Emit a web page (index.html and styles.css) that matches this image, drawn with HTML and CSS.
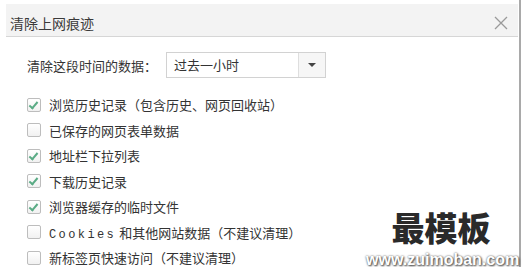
FILE: index.html
```html
<!DOCTYPE html>
<html lang="zh-CN">
<head>
    <meta charset="UTF-8">
    <title>清除上网痕迹</title>
    <link rel="stylesheet" href="styles.css">
</head>
<body>
    <div class="frame">
        <!-- 标题栏 -->
        <div class="header">
            <span class="title">清除上网痕迹</span>
            <svg class="close" width="14" height="14" viewBox="0 0 14 14">
                <path d="M1 1 L13 13 M13 1 L1 13" stroke="#9a9a9a" stroke-width="1.3" fill="none"/>
            </svg>
        </div>

        <!-- 时间范围 -->
        <div class="range-row">
            <span>清除这段时间的数据：</span>
            <div class="select">
                <span class="select-text">过去一小时</span>
                <span class="select-btn"><i class="arrow"></i></span>
            </div>
        </div>

        <!-- 选项列表 -->
        <div class="options">
            <div class="option"><span class="box checked"></span><span>浏览历史记录（包含历史、网页回收站）</span></div>
            <div class="option"><span class="box"></span><span>已保存的网页表单数据</span></div>
            <div class="option"><span class="box checked"></span><span>地址栏下拉列表</span></div>
            <div class="option"><span class="box checked"></span><span>下载历史记录</span></div>
            <div class="option"><span class="box checked"></span><span>浏览器缓存的临时文件</span></div>
            <div class="option"><span class="box"></span><span><span class="mono">Cookies</span> 和其他网站数据（不建议清理）</span></div>
            <div class="option"><span class="box"></span><span>新标签页快速访问（不建议清理）</span></div>
        </div>

        <div class="watermark">
            <div class="wm-big">最模板</div>
            <div class="wm-url">www.zuimoban.com</div>
        </div>
    </div>
</body>
</html>
```

FILE: styles.css
```css
body {
    margin: 0;
    background-color: #fff;
    font-family: "Noto Sans CJK SC", "Noto Sans", sans-serif;
    color: #333;
    font-size: 13px;
    overflow: hidden;
}
.frame {
    position: relative;
    width: 513px;
    height: 263px;
    padding: 4px 0 0 6px;
    border-right: 2px solid #a9a9a9;
}
.header {
    display: flex;
    align-items: center;
    justify-content: space-between;
    width: 512px;
    height: 33px;
    background-color: #f3f3f3;
    border-bottom: 1px solid #d6d6d6;
    box-sizing: border-box;
    padding: 6px 10px 0 4px;
}
.title {
    font-size: 14px;
    color: #3a3a3a;
}
.range-row {
    display: flex;
    align-items: center;
    gap: 9px;
    margin-top: 15px;
    padding-left: 21px;
}
.select {
    display: flex;
    width: 158px;
    height: 24px;
    border: 1px solid #d2d2d2;
}
.select-text {
    flex: 1;
    padding-left: 7px;
    line-height: 24px;
}
.select-btn {
    width: 26px;
    border-left: 1px solid #dedede;
    background-color: #f6f6f6;
    display: flex;
    align-items: center;
    justify-content: center;
}
.arrow {
    width: 0;
    height: 0;
    border-left: 4px solid transparent;
    border-right: 4px solid transparent;
    border-top: 4px solid #444;
}
.options {
    margin-top: 14px;
    padding-left: 21px;
}
.option {
    display: flex;
    align-items: center;
    gap: 8px;
    height: 25.5px;
}
.box {
    width: 12px;
    height: 12px;
    border: 1px solid #bdbdbd;
    border-radius: 2px;
    background: linear-gradient(#fff, #f1f1f1);
    position: relative;
}
.box.checked::after {
    content: "";
    position: absolute;
    left: 3px;
    top: 1px;
    width: 3px;
    height: 7px;
    border-right: 2px solid #5aab85;
    border-bottom: 2px solid #5aab85;
    transform: rotate(40deg);
}
.mono {
    font-family: "Liberation Mono", monospace;
    font-size: 12px;
    letter-spacing: 2.4px;
}
.watermark {
    position: absolute;
    left: 366px;
    top: 203px;
    text-align: center;
    width: 150px;
}
.wm-big {
    font-size: 33px;
    font-weight: 900;
    line-height: 48px;
    color: #2a2a2a;
}
.wm-url {
    font-family: "Liberation Sans", Arial, sans-serif;
    font-size: 16px;
    font-weight: bold;
    line-height: 17px;
    color: #fff;
    text-shadow: 0 0 2px #555, 1px 1px 2px #444;
    border-bottom: 2px solid #c8ece4;
}
```
